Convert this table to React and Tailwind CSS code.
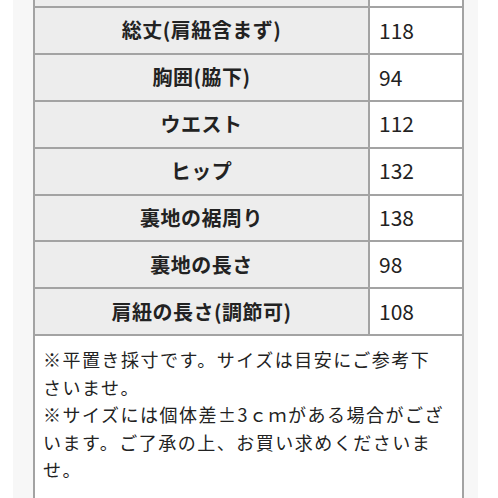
import React from 'react';

const rows = [
  ['総丈(肩紐含まず)', '118'],
  ['胸囲(脇下)', '94'],
  ['ウエスト', '112'],
  ['ヒップ', '132'],
  ['裏地の裾周り', '138'],
  ['裏地の長さ', '98'],
  ['肩紐の長さ(調節可)', '108'],
];

const noteLines = [
  '※平置き採寸です。サイズは目安にご参考下',
  'さいませ。',
  '※サイズには個体差±3ｃｍがある場合がござ',
  'います。ご了承の上、お買い求めくださいま',
  'せ。',
];

const App = () => {
  return (
    <div
      className="w-[498px] h-[498px] overflow-hidden bg-white text-[#222]"
      style={{ fontFamily: '"Noto Sans CJK JP", "Noto Sans", sans-serif' }}
    >
      <div className="ml-[13px] w-[465px] h-full bg-[#f7f7f7] pl-[20px]">
        <div className="w-[431px] border-x-2 border-[#a3a3a3] bg-white">
          <div className="flex h-[8px] border-b-2 border-[#a3a3a3]">
            <div className="w-[335px] bg-[#ededed] border-r-2 border-[#a3a3a3]" />
            <div className="flex-1 bg-white" />
          </div>
          {rows.map(([label, value]) => (
            <div key={label} className="flex h-[46.9px] border-b-2 border-[#a3a3a3]">
              <div className="w-[335px] bg-[#ededed] border-r-2 border-[#a3a3a3] flex items-center justify-center text-[20px] font-semibold tracking-[0.5px]">
                {label}
              </div>
              <div className="flex-1 bg-white flex items-center pl-[9px] text-[21px]">
                {value}
              </div>
            </div>
          ))}
          <div className="px-[8px] pt-[10px] pb-[60px] text-[18px] leading-[27.5px] tracking-[1.5px]">
            {noteLines.map((line) => (
              <div key={line} className="whitespace-nowrap">
                {line}
              </div>
            ))}
          </div>
        </div>
      </div>
    </div>
  );
};

export default App;
